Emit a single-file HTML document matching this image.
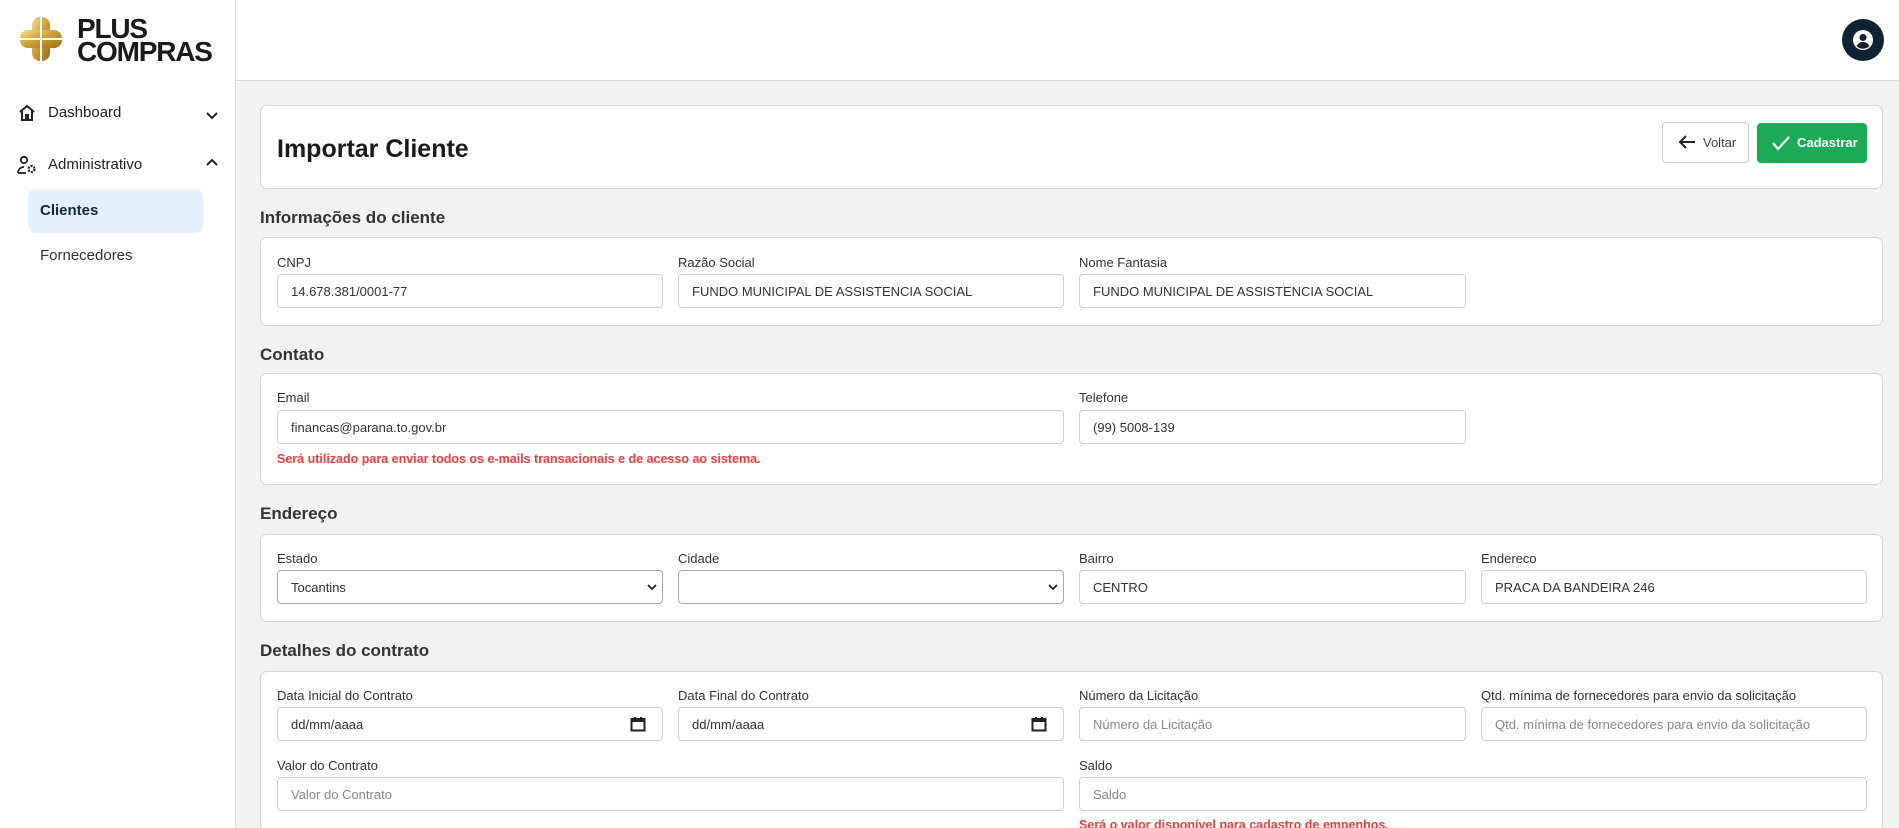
<!DOCTYPE html>
<html><head><meta charset="utf-8"><style>
*{box-sizing:border-box;margin:0;padding:0}
html,body{width:1899px;height:828px;overflow:hidden}
body{background:#f2f2f2;font-family:"Liberation Sans",Arial,sans-serif;color:#222;position:relative}
.a{position:absolute}
#hdr{left:0;top:0;width:1899px;height:81px;background:#fff;border-bottom:1px solid #d6d6d6}
#side{left:0;top:0;width:236px;height:828px;background:#fff;border-right:1px solid #d6d6d6}
.card{position:absolute;left:260px;width:1623px;background:#fff;border:1px solid #d4d4d4;border-radius:7px}
.sec{position:absolute;left:260px;font-size:17px;font-weight:bold;color:#333}
.lbl{position:absolute;font-size:13px;color:#333}
.inp{position:absolute;height:34px;border:1px solid #cfcfcf;border-radius:4px;background:#fff;font-size:13px;color:#333;padding:9px 13px;white-space:nowrap}
.ph{color:#888}
.red{position:absolute;font-size:12.5px;font-weight:bold;color:#f03c3c}
.nav{position:absolute;font-size:15px;color:#222}
</style></head><body>
<div id="hdr" class="a"></div>
<div id="side" class="a"></div>
<!-- logo -->
<svg class="a" style="left:20px;top:17px" width="42" height="44" viewBox="0 0 42 44">
<defs><linearGradient id="g" x1="0" y1="0" x2="1" y2="1"><stop offset="0" stop-color="#f6de8a"/><stop offset=".45" stop-color="#d2a23a"/><stop offset="1" stop-color="#9a6c18"/></linearGradient></defs>
<rect x="12" y="0" width="18" height="44" rx="8" fill="url(#g)"/>
<rect x="0" y="13" width="42" height="18" rx="8" fill="url(#g)"/>
<path d="M21 0v44M0 22h42" stroke="#fff" stroke-width="2"/>
</svg>
<div class="a" style="left:77px;top:17px;font-size:28px;font-weight:bold;line-height:23px;color:#1a1a1a;letter-spacing:-1.2px">PLUS<br>COMPRAS</div>
<!-- avatar -->
<div class="a" style="left:1842px;top:19px;width:42px;height:42px;border-radius:50%;background:#0e2233"></div>
<svg class="a" style="left:1852px;top:29px" width="22" height="22" viewBox="0 0 22 22"><circle cx="11" cy="11" r="10" fill="#fff"/><circle cx="11" cy="8.5" r="3.5" fill="#0e2233"/><path d="M4.5 17c2-3 4-4 6.5-4s4.5 1 6.5 4a9 9 0 0 1-13 0z" fill="#0e2233"/></svg>
<!-- sidebar nav -->
<svg class="a" style="left:18px;top:104px" width="18" height="18" viewBox="0 0 18 18"><path d="M2 8L9 2l7 6M4 7v9h4v-5h2v5h4V7" fill="none" stroke="#222" stroke-width="2"/></svg>
<div class="nav" style="left:48px;top:104px">Dashboard</div>
<svg class="a" style="left:206px;top:112px" width="12" height="8"><path d="M1 1l5 5 5-5" fill="none" stroke="#222" stroke-width="2"/></svg>
<svg class="a" style="left:17px;top:155px" width="20" height="20" viewBox="0 0 20 20"><circle cx="7" cy="5" r="3.2" fill="none" stroke="#222" stroke-width="1.8"/><path d="M1 18c0-4 3-6 6-6" fill="none" stroke="#222" stroke-width="1.8"/><path d="M1 18h8" stroke="#222" stroke-width="1.8"/><circle cx="14.5" cy="14" r="3" fill="none" stroke="#222" stroke-width="2.2" stroke-dasharray="2 1.2"/></svg>
<div class="nav" style="left:48px;top:156px">Administrativo</div>
<svg class="a" style="left:206px;top:158px" width="12" height="8"><path d="M1 7l5-5 5 5" fill="none" stroke="#222" stroke-width="2"/></svg>
<div class="a" style="left:28px;top:189px;width:175px;height:44px;background:#e3f1fd;border-radius:8px"></div>
<div class="nav" style="left:40px;top:202px;font-weight:bold;color:#0d2a3f">Clientes</div>
<div class="nav" style="left:40px;top:247px;color:#333">Fornecedores</div>
<!-- title card -->
<div class="card" style="top:105px;height:84px"></div>
<div class="a" style="left:277px;top:135px;font-size:25px;font-weight:bold;color:#1a1a1a">Importar Cliente</div>
<div class="a" style="left:1662px;top:122px;width:87px;height:41px;border:1px solid #ccc;border-radius:4px;background:#fff"></div>
<svg class="a" style="left:1678px;top:134px" width="18" height="16"><path d="M17 8H2M8 2L2 8l6 6" fill="none" stroke="#222" stroke-width="2"/></svg>
<div class="a" style="left:1703px;top:135px;font-size:13px;color:#444">Voltar</div>
<div class="a" style="left:1757px;top:123px;width:110px;height:40px;background:#1bab57;border-radius:4px"></div>
<svg class="a" style="left:1771px;top:135px" width="20" height="16"><path d="M2 8l5 6L18 2" fill="none" stroke="#fff" stroke-width="2.2"/></svg>
<div class="a" style="left:1797px;top:135px;font-size:13px;font-weight:bold;color:#fff">Cadastrar</div>
<!-- section 1 -->
<div class="sec" style="top:208px">Informações do cliente</div>
<div class="card" style="top:237px;height:89px"></div>
<div class="lbl" style="left:277px;top:255px">CNPJ</div>
<div class="lbl" style="left:678px;top:255px">Razão Social</div>
<div class="lbl" style="left:1079px;top:255px">Nome Fantasia</div>
<div class="inp" style="left:277px;top:274px;width:386px">14.678.381/0001-77</div>
<div class="inp" style="left:678px;top:274px;width:386px">FUNDO MUNICIPAL DE ASSISTENCIA SOCIAL</div>
<div class="inp" style="left:1079px;top:274px;width:387px">FUNDO MUNICIPAL DE ASSISTENCIA SOCIAL</div>
<!-- section 2 -->
<div class="sec" style="top:345px">Contato</div>
<div class="card" style="top:373px;height:112px"></div>
<div class="lbl" style="left:277px;top:390px">Email</div>
<div class="lbl" style="left:1079px;top:390px">Telefone</div>
<div class="inp" style="left:277px;top:410px;width:787px">financas@parana.to.gov.br</div>
<div class="inp" style="left:1079px;top:410px;width:387px">(99) 5008-139</div>
<div class="red" style="left:277px;top:452px">Será utilizado para enviar todos os e-mails transacionais e de acesso ao sistema.</div>
<!-- section 3 -->
<div class="sec" style="top:504px">Endereço</div>
<div class="card" style="top:534px;height:88px"></div>
<div class="lbl" style="left:277px;top:551px">Estado</div>
<div class="lbl" style="left:678px;top:551px">Cidade</div>
<div class="lbl" style="left:1079px;top:551px">Bairro</div>
<div class="lbl" style="left:1481px;top:551px">Endereco</div>
<div class="inp" style="left:277px;top:570px;width:386px;border-color:#aaa">Tocantins</div>
<svg class="a" style="left:647px;top:584px" width="10" height="7"><path d="M1 1l4 4 4-4" fill="none" stroke="#222" stroke-width="1.8"/></svg>
<div class="inp" style="left:678px;top:570px;width:386px;border-color:#aaa"></div>
<svg class="a" style="left:1048px;top:584px" width="10" height="7"><path d="M1 1l4 4 4-4" fill="none" stroke="#222" stroke-width="1.8"/></svg>
<div class="inp" style="left:1079px;top:570px;width:387px">CENTRO</div>
<div class="inp" style="left:1481px;top:570px;width:386px">PRACA DA BANDEIRA 246</div>
<!-- section 4 -->
<div class="sec" style="top:641px">Detalhes do contrato</div>
<div class="card" style="top:671px;height:170px"></div>
<div class="lbl" style="left:277px;top:688px">Data Inicial do Contrato</div>
<div class="lbl" style="left:678px;top:688px">Data Final do Contrato</div>
<div class="lbl" style="left:1079px;top:688px">Número da Licitação</div>
<div class="lbl" style="left:1481px;top:688px">Qtd. mínima de fornecedores para envio da solicitação</div>
<div class="inp" style="left:277px;top:707px;width:386px">dd/mm/aaaa</div>
<div class="inp" style="left:678px;top:707px;width:386px">dd/mm/aaaa</div>
<svg class="a" style="left:630px;top:716px" width="16" height="16"><rect x="1.5" y="3" width="13" height="11.5" fill="none" stroke="#222" stroke-width="2"/><rect x="1.5" y="3" width="13" height="3" fill="#222"/><path d="M5 1v3M11 1v3" stroke="#222" stroke-width="2"/></svg>
<svg class="a" style="left:1031px;top:716px" width="16" height="16"><rect x="1.5" y="3" width="13" height="11.5" fill="none" stroke="#222" stroke-width="2"/><rect x="1.5" y="3" width="13" height="3" fill="#222"/><path d="M5 1v3M11 1v3" stroke="#222" stroke-width="2"/></svg>
<div class="inp ph" style="left:1079px;top:707px;width:387px">Número da Licitação</div>
<div class="inp ph" style="left:1481px;top:707px;width:386px">Qtd. mínima de fornecedores para envio da solicitação</div>
<div class="lbl" style="left:277px;top:758px">Valor do Contrato</div>
<div class="lbl" style="left:1079px;top:758px">Saldo</div>
<div class="inp ph" style="left:277px;top:777px;width:787px">Valor do Contrato</div>
<div class="inp ph" style="left:1079px;top:777px;width:788px">Saldo</div>
<div class="red" style="left:1079px;top:818px">Será o valor disponível para cadastro de empenhos.</div>
</body></html>
